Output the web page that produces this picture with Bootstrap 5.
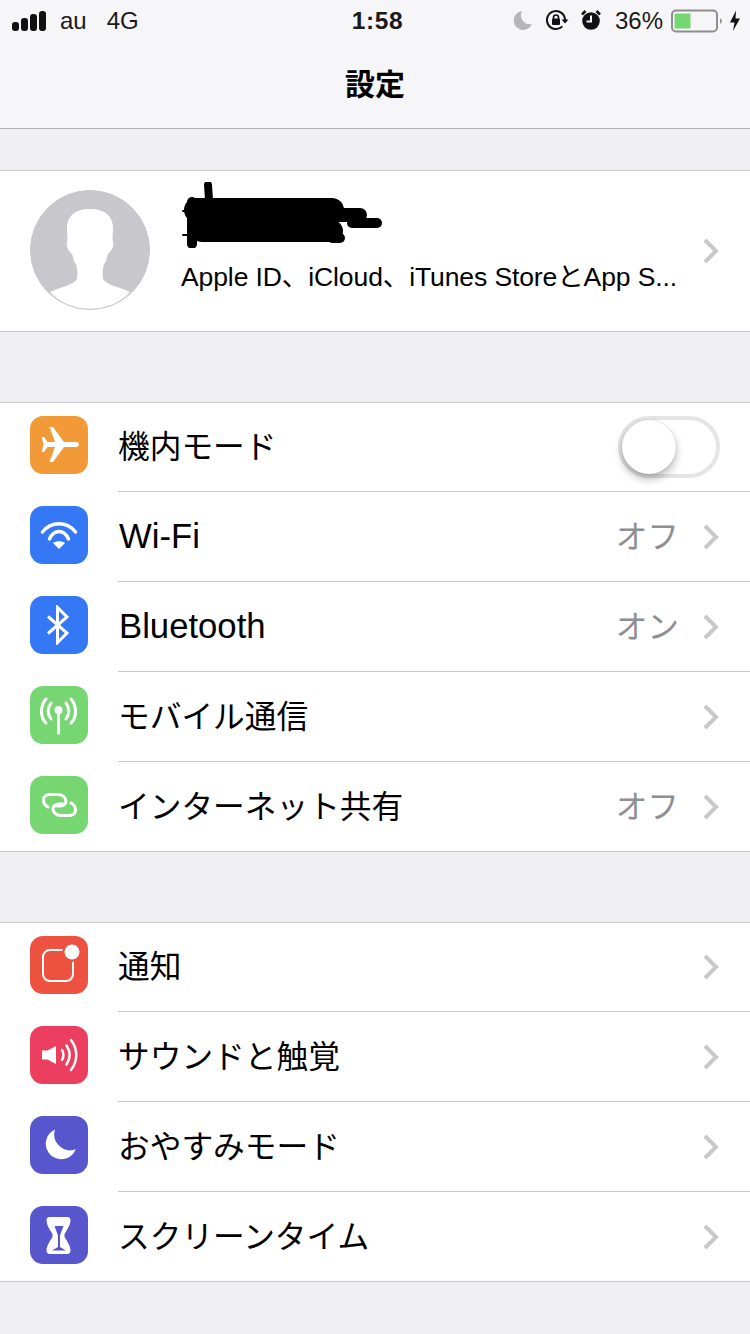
<!DOCTYPE html>
<html>
<head>
    <meta charset="UTF-8">
    <title>設定</title>
    <link href="https://cdn.jsdelivr.net/npm/bootstrap@5.3.5/dist/css/bootstrap.min.css" rel="stylesheet">
    <style>
        html, body { height: 1334px; overflow: hidden; }
        body {
            background: #efeff4;
            color: #000;
            font-family: "Liberation Sans", "Noto Sans CJK JP", sans-serif;
        }
        .top-bar { height: 129px; background: #f6f6f8; border-bottom: 1px solid #b2b2b2; }
        .status-row { height: 42px; padding: 0 9px 0 12px; font-size: 24px; color: #1a1a1a; }
        .status-left, .status-right { flex: 1 1 0; }
        .status-time { font-weight: 700; font-size: 24.5px; letter-spacing: .6px; margin-left: 2px; }
        .carrier { margin-left: 14px; }
        .net { margin-left: 20px; }
        .si-moon { margin: 0 12px 2px 0; }
        .si-lock { margin: 0 11px 2px 0; }
        .si-alarm { margin: 0 13px 2px 0; }
        .si-batt { margin: 0 0 1px 8px; }
        .title-row { height: 86px; padding-bottom: 6px; font-size: 30px; font-weight: 700; font-family: "Noto Sans CJK JP", sans-serif; }
        .settings-group { background: #fff; border-top: 1px solid #c8c7cc; border-bottom: 1px solid #c8c7cc; }
        .group-profile { margin-top: 41px; height: 162px; padding: 0 30px; }
        .group-net { margin-top: 70px; }
        .group-sys { margin-top: 70px; }
        .avatar { width: 120px; height: 120px; flex: none; display: block; margin-bottom: 2px; }
        .profile-text { margin: 0 0 28px 31px; flex: 1 1 0; min-width: 0; }
        .scribble { display: block; width: 210px; height: 66px; margin-left: 1px; }
        .profile-sub { font-size: 26.5px; line-height: 32px; margin-top: 13px; white-space: nowrap; letter-spacing: -.1px; }
        .setting-row { height: 90px; padding-left: 30px; }
        .setting-row.first-row, .setting-row.last-row { height: 89px; }
        .app-icon { width: 58px; height: 58px; border-radius: 13px; flex: none; display: flex; align-items: center; justify-content: center; align-self: flex-start; margin-top: 14px; }
        .first-row .app-icon { margin-top: 13px; }
        .row-body { margin-left: 30px; padding-right: 30px; flex: 1 1 0; height: 100%; border-bottom: 1px solid #c8c7cc; }
        .last-row .row-body { border-bottom: 0; }
        .row-label { font-size: 31.7px; font-family: "Noto Sans CJK JP", sans-serif; margin-bottom: 4px; }
        .row-label.latin { font-family: "Liberation Sans", sans-serif; font-size: 34.7px; margin: 0 0 0 1px; }
        .row-value { font-size: 31.7px; color: #8e8e93; font-family: "Noto Sans CJK JP", sans-serif; margin: 0 24px 4px 0; }
        .chev { width: 16px; height: 26px; flex: none; display: block; margin-right: 1px; }
        .ic-orange { background: #f19a37; }
        .ic-blue { background: #3478f6; }
        .ic-green { background: #76d672; }
        .ic-red { background: #ec523f; }
        .ic-pink { background: #ec3f5f; }
        .ic-purple { background: #5856cc; }
        .toggle-track { width: 102px; height: 62px; border: 4px solid #e5e5e5; border-radius: 31px; position: relative; background: #fff; }
        .toggle-knob { position: absolute; left: 0; top: 0; width: 54px; height: 54px; border-radius: 50%; background: #fff; box-shadow: 0 5px 8px rgba(0,0,0,.28), 0 0 2px rgba(0,0,0,.18); }
    </style>
</head>
<body>
<div class="top-bar">
    <div class="status-row d-flex align-items-center">
        <div class="status-left d-flex align-items-center">
            <svg width="34" height="20" viewBox="0 0 34 20"><rect x="0" y="11" width="7" height="9" rx="3" fill="#111"/><rect x="9" y="7" width="7" height="13" rx="3" fill="#111"/><rect x="18" y="3" width="7" height="17" rx="3" fill="#111"/><rect x="27" y="0" width="7" height="20" rx="3" fill="#111"/></svg>
            <span class="carrier">au</span><span class="net">4G</span>
        </div>
        <div class="status-time">1:58</div>
        <div class="status-right d-flex align-items-center justify-content-end">
            <svg width="20" height="20" viewBox="0 0 20 20" class="si-moon"><path d="M9 1a9.5 9.5 0 1 0 10 13A9 9 0 0 1 9 1z" fill="#b5b5b8"/></svg>
            <svg width="24" height="22" viewBox="0 0 24 22" class="si-lock"><path d="M17.4 17.400A9 9 0 1 1 20 11" fill="none" stroke="#111" stroke-width="2"/><path d="M16.500 10.500h7l-3.500 4z" fill="#111"/><path d="M8.500 10V8.500a2.500 2.500 0 0 1 5 0V10" fill="none" stroke="#111" stroke-width="1.600"/><rect x="7" y="9.500" width="8" height="6.500" rx="1" fill="#111"/></svg>
            <svg width="22" height="22" viewBox="0 0 22 22" class="si-alarm"><circle cx="11" cy="12" r="8.800" fill="#111"/><path d="M11 6.500v6H6.500" fill="none" stroke="#f6f6f8" stroke-width="2"/><path d="M2 5.500l3.500-3.500M20 5.500l-3.500-3.500" stroke="#111" stroke-width="2.500"/></svg>
            <span>36%</span>
            <svg width="70" height="24" viewBox="0 0 70 24" class="si-batt"><rect x="1" y="1.500" width="45" height="21" rx="4" fill="none" stroke="#8e8e90" stroke-width="2"/><rect x="3.500" y="4.500" width="16" height="15" fill="#76d672"/><path d="M49 9.500c2.500 0 2.500 5 0 5z" fill="#8e8e90"/><path d="M65 1.500l-6 12h4.500l-1.500 8.500 7-12.500h-4.500z" fill="#111"/></svg>
        </div>
    </div>
    <div class="title-row d-flex align-items-center justify-content-center">設定</div>
</div>

<div class="settings-group group-profile d-flex align-items-center">
    <svg class="avatar" viewBox="0 0 120 120">
        <circle cx="60" cy="60" r="59.500" fill="#c7c7cc"/>
        <path d="M20 102C30 97 44 95 47 89C48 82 47 78 46 74C43 72 44 68 42 64C38 60 36 58 37 52C38 50 37 44 37 38C37 27 44 19 60 19C76 19 83 27 83 38C83 44 82 50 83 52C84 58 82 60 78 64C76 68 77 72 74 74C73 78 72 82 73 89C76 95 90 97 100 102C90 113 76 119 60 119C44 119 30 113 20 102Z" fill="#fff"/>
        <circle cx="60" cy="60" r="59.500" fill="none" stroke="#c7c7cc"/>
    </svg>
    <div class="profile-text">
        <svg class="scribble" viewBox="0 0 210 66">
            <g stroke="#000" stroke-linecap="round" fill="none">
                <path d="M26 3l1 15" stroke-width="8"/>
                <path d="M10 20V62" stroke-width="10"/>
                <path d="M14 28H150" stroke-width="24"/>
                <path d="M20 49H150" stroke-width="22"/>
                <path d="M150 33H178" stroke-width="14"/>
                <path d="M170 41H195" stroke-width="10"/>
                <path d="M150 56h8" stroke-width="10"/>
                <path d="M1 29h6M1 53h6" stroke-width="2"/>
            </g>
        </svg>
        <div class="profile-sub">Apple ID、iCloud、iTunes StoreとApp S...</div>
    </div>
    <svg class="chev" viewBox="0 0 16 26"><path d="M2 2l11 11L2 24" fill="none" stroke="#c7c7cc" stroke-width="4"/></svg>
</div>

<div class="settings-group group-net">
    <div class="setting-row first-row d-flex align-items-center">
        <div class="app-icon ic-orange">
            <svg width="40" height="40" viewBox="0 0 40 40"><path d="M40 19.500c0-1.700-1.500-2.500-3-2.500H25L14 2h-3.500L16 17H8.500L5 12H2.700l1.800 7.500L2.700 27H5l3.500-5H16l-5.500 15H14l11-15h12c1.500 0 3-.8 3-2.500z" fill="#fff"/></svg>
        </div>
        <div class="row-body d-flex align-items-center">
            <span class="row-label flex-grow-1">機内モード</span>
            <div class="toggle-track"><div class="toggle-knob"></div></div>
        </div>
    </div>
    <div class="setting-row d-flex align-items-center">
        <div class="app-icon ic-blue">
            <svg width="40" height="34" viewBox="0 0 40 34"><path d="M3.500 14C12 3 28 3 36.500 14M10.500 21C15 11 25 11 29.500 21" fill="none" stroke="#fff" stroke-width="3.500" stroke-linecap="round"/><path d="M14 25c3-2.500 9-2.500 12 0l-6 6z" fill="#fff"/></svg>
        </div>
        <div class="row-body d-flex align-items-center">
            <span class="row-label latin flex-grow-1">Wi-Fi</span>
            <span class="row-value">オフ</span>
            <svg class="chev" viewBox="0 0 16 26"><path d="M2 2l11 11L2 24" fill="none" stroke="#c7c7cc" stroke-width="4"/></svg>
        </div>
    </div>
    <div class="setting-row d-flex align-items-center">
        <div class="app-icon ic-blue">
            <svg width="26" height="40" viewBox="0 0 26 40"><path d="M2 11.500L21 28l-9.500 9.500v-35L21 12 2 28.500" fill="none" stroke="#fff" stroke-width="3"/></svg>
        </div>
        <div class="row-body d-flex align-items-center">
            <span class="row-label latin flex-grow-1">Bluetooth</span>
            <span class="row-value">オン</span>
            <svg class="chev" viewBox="0 0 16 26"><path d="M2 2l11 11L2 24" fill="none" stroke="#c7c7cc" stroke-width="4"/></svg>
        </div>
    </div>
    <div class="setting-row d-flex align-items-center">
        <div class="app-icon ic-green">
            <svg width="40" height="40" viewBox="0 0 40 40"><circle cx="19.500" cy="15" r="4" fill="#fff"/><path d="M19.500 16v22" stroke="#fff" stroke-width="3" stroke-linecap="round"/><g fill="none" stroke="#fff" stroke-width="3" stroke-linecap="round"><path d="M12 8c-3.500 5-3.500 11 0 16M27 8c3.500 5 3.500 11 0 16"/><path d="M7 4c-6 7-6 18 0 24M32 4c6 7 6 18 0 24"/></g></svg>
        </div>
        <div class="row-body d-flex align-items-center">
            <span class="row-label flex-grow-1">モバイル通信</span>
            <svg class="chev" viewBox="0 0 16 26"><path d="M2 2l11 11L2 24" fill="none" stroke="#c7c7cc" stroke-width="4"/></svg>
        </div>
    </div>
    <div class="setting-row last-row d-flex align-items-center">
        <div class="app-icon ic-green">
            <svg width="38" height="38" viewBox="0 0 38 38" fill="none" stroke="#fff" stroke-width="3" stroke-linecap="round"><path d="M8 21C4 19 3.500 16 3.500 14 3.500 10 7 8.500 10 8.500H18C23 8.500 26 12 26 15.500 26 18 23 20 20 20H16"/><path d="M31 17C35 19 35.500 22 35.500 24 35.500 28 32 29.500 29 29.500H21C16 29.500 13 26 13 22.500 13 20 16 18 19 18H23"/></svg>
        </div>
        <div class="row-body d-flex align-items-center">
            <span class="row-label flex-grow-1">インターネット共有</span>
            <span class="row-value">オフ</span>
            <svg class="chev" viewBox="0 0 16 26"><path d="M2 2l11 11L2 24" fill="none" stroke="#c7c7cc" stroke-width="4"/></svg>
        </div>
    </div>
</div>

<div class="settings-group group-sys">
    <div class="setting-row first-row d-flex align-items-center">
        <div class="app-icon ic-red">
            <svg width="46" height="46" viewBox="0 0 46 46"><rect x="7" y="8" width="30" height="31" rx="7" fill="none" stroke="#fff" stroke-width="2"/><circle cx="36" cy="10" r="10" fill="#ec523f"/><circle cx="36" cy="10" r="7.500" fill="#fff"/></svg>
        </div>
        <div class="row-body d-flex align-items-center">
            <span class="row-label flex-grow-1">通知</span>
            <svg class="chev" viewBox="0 0 16 26"><path d="M2 2l11 11L2 24" fill="none" stroke="#c7c7cc" stroke-width="4"/></svg>
        </div>
    </div>
    <div class="setting-row d-flex align-items-center">
        <div class="app-icon ic-pink">
            <svg width="38" height="34" viewBox="0 0 38 34"><path d="M2 12.500h5.500L16 8v18l-8.500-4.500H2z" fill="#fff"/><g fill="none" stroke="#fff" stroke-width="2.500" stroke-linecap="round"><path d="M22 12c2 3.500 2 6.500 0 10"/><path d="M26.500 7.500c4 6 4 13 0 19"/><path d="M31 2c7 9 7 21 0 30"/></g></svg>
        </div>
        <div class="row-body d-flex align-items-center">
            <span class="row-label flex-grow-1">サウンドと触覚</span>
            <svg class="chev" viewBox="0 0 16 26"><path d="M2 2l11 11L2 24" fill="none" stroke="#c7c7cc" stroke-width="4"/></svg>
        </div>
    </div>
    <div class="setting-row d-flex align-items-center">
        <div class="app-icon ic-purple">
            <svg width="34" height="34" viewBox="0 0 34 34"><path d="M13 1.500A15.500 15.500 0 1 0 33.700 21.300 16 16 0 0 1 13 1.500z" fill="#fff"/></svg>
        </div>
        <div class="row-body d-flex align-items-center">
            <span class="row-label flex-grow-1">おやすみモード</span>
            <svg class="chev" viewBox="0 0 16 26"><path d="M2 2l11 11L2 24" fill="none" stroke="#c7c7cc" stroke-width="4"/></svg>
        </div>
    </div>
    <div class="setting-row last-row d-flex align-items-center">
        <div class="app-icon ic-purple">
            <svg width="26" height="38" viewBox="0 0 26 38"><path d="M3.500 1h18c1.500 0 3 1 3 3 0 5-3 9-6 14v3c3 5 6 9 6 13.500 0 2-1.500 3.500-3 3.500h-18c-1.500 0-3-1.500-3-3.500 0-4.500 3-8.500 6-13.500v-3c-3-5-6-9-6-14 0-2 1.500-3 3-3z" fill="#fff"/><path d="M8.500 10h9l-3.500 9.500V31l6 3.500H6l6-3.500V19.500z" fill="#5856cc"/></svg>
        </div>
        <div class="row-body d-flex align-items-center">
            <span class="row-label flex-grow-1">スクリーンタイム</span>
            <svg class="chev" viewBox="0 0 16 26"><path d="M2 2l11 11L2 24" fill="none" stroke="#c7c7cc" stroke-width="4"/></svg>
        </div>
    </div>
</div>

<script src="https://cdn.jsdelivr.net/npm/bootstrap@5.3.5/dist/js/bootstrap.bundle.min.js"></script>
</body>
</html>
